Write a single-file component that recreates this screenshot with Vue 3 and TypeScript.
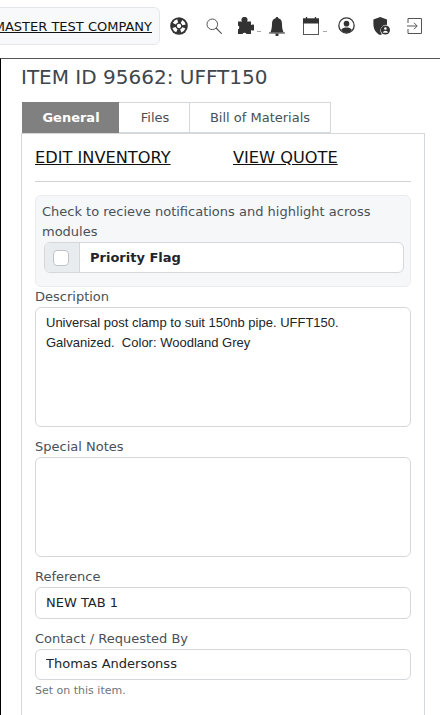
<script setup lang="ts">
const tabs: string[] = ['General', 'Files', 'Bill of Materials']
const description = 'Universal post clamp to suit 150nb pipe. UFFT150.\nGalvanized.  Color: Woodland Grey'
</script>

<template>
  <div class="page">
    <header class="topbar">
      <a class="company">MASTER TEST COMPANY</a>
      <div class="icons">
        <svg class="ic i-ring" viewBox="0 0 20 20"><circle cx="10" cy="10" r="9.8" fill="#333"/><circle cx="10" cy="10" r="5.800" fill="none" stroke="#fff" stroke-width="3.800" stroke-dasharray="4.700 4.410" stroke-dashoffset="-2.200"/><circle cx="10" cy="10" r="2.400" fill="#fff"/></svg>
        <svg class="ic i-search" viewBox="0 0 16 16" fill="none" stroke="#555"><circle cx="6.300" cy="6.300" r="5.300" stroke-width="1"/><path d="m10 10 5.700 5.700" stroke-width="1.100"/></svg>
        <svg class="ic i-puzzle" viewBox="0 0 17 17"><path fill="#333" d="M1 4.500H5A3 3 0 1 1 10 4.500H14V8A3 3 0 1 1 14 13V17H9.500A2.200 2.200 0 0 0 5.500 17H1V12.500A2.200 2.200 0 0 0 1 8.500Z"/></svg>
        <span class="dash d1"></span>
        <svg class="ic i-bell" viewBox="0 0 16 19"><path fill="#333" d="M8 0c.8 0 1.300.5 1.300 1.300 2.900.6 3.700 3 3.700 5.700 0 3.500.6 6.200 1.600 8.500H1.400C2.400 13.200 3 10.500 3 7c0-2.700.8-5.100 3.700-5.700C6.700.5 7.200 0 8 0z"/><path d="M0 16h16" stroke="#333" stroke-width="1"/><path fill="#333" d="M6.500 16.500h3V18a1.500 1.500 0 0 1-3 0z"/></svg>
        <svg class="ic i-cal" viewBox="0 0 16 18"><rect x=".5" y="2" width="15" height="15.500" fill="#fff" stroke="#555" stroke-width="1"/><path fill="#333" d="M0 1.500h16V6.500H0z"/><path d="M3.500 0v2M12.500 0v2" stroke="#333" stroke-width="1.300"/></svg>
        <span class="dash d2"></span>
        <svg class="ic i-user" viewBox="0 0 20 20"><circle cx="10" cy="10" r="9" fill="#fff" stroke="#333" stroke-width="1.500"/><circle cx="10" cy="7.800" r="3.300" fill="#333"/><path fill="#333" d="M3.600 15.200c1.500-2.200 3.800-2.800 6.400-2.800s4.900.6 6.400 2.800A8.700 8.700 0 0 1 10 18.900a8.700 8.700 0 0 1-6.400-3.700z"/></svg>
        <svg class="ic i-shield" viewBox="0 0 17 18"><path fill="#333" d="M7.200 0 14 2.500v5.500a5.500 5.500 0 0 0-5 9.200l-1.800.8C2.400 16 .4 11.500.4 7V2.500z"/><circle cx="12.400" cy="13" r="4.600" fill="#333"/><circle cx="12.400" cy="11.500" r="1.300" fill="#fff"/><path fill="#fff" d="M9.800 15.800a2.700 2.700 0 0 1 5.200 0z"/></svg>
        <svg class="ic i-exit" viewBox="0 0 15 16" fill="none" stroke="#555" stroke-width="1"><path d="M1 5V.5h13.500v15H1V11"/><path d="M0 8h10M7 4.800 10.200 8 7 11.200"/></svg>
      </div>
    </header>

    <main class="main">
      <h1 class="title">ITEM ID 95662: UFFT150</h1>
      <nav class="tabs">
        <div v-for="(t, i) in tabs" :key="t" class="tab" :class="{ active: i === 0 }">{{ t }}</div>
      </nav>
      <section class="panel">
        <div class="links">
          <a class="link edit">EDIT INVENTORY</a>
          <a class="link">VIEW QUOTE</a>
        </div>
        <hr class="rule" />
        <div class="notice">
          <p class="notice-text">Check to recieve notifications and highlight across modules</p>
          <div class="group">
            <span class="addon"><span class="check"></span></span>
            <span class="flag">Priority Flag</span>
          </div>
        </div>
        <label class="label first">Description</label>
        <textarea class="control desc" readonly :value="description"></textarea>
        <label class="label">Special Notes</label>
        <textarea class="control notes" readonly></textarea>
        <label class="label">Reference</label>
        <input class="control input ref" readonly value="NEW TAB 1" />
        <label class="label">Contact / Requested By</label>
        <input class="control input" readonly value="Thomas Andersonss" />
        <small class="help">Set on this item.</small>
      </section>
    </main>
  </div>
</template>

<style>
html, body { margin: 0; background: #fff; overflow: hidden; }
</style>

<style scoped>
.page {
  width: 440px;
  height: 715px;
  overflow: hidden;
  font-family: "DejaVu Sans", sans-serif;
  background: #fff;
}
.topbar {
  display: flex;
  align-items: flex-start;
  height: 58px;
  box-sizing: border-box;
}
.company {
  flex: none;
  box-sizing: border-box;
  display: flex;
  align-items: center;
  justify-content: flex-end;
  width: 180px;
  height: 38px;
  margin: 7px 0 0 -20px;
  padding-right: 7px;
  background: #f8f9fa;
  border: 1px solid #e4e7ea;
  border-radius: 6px;
  font-size: 13px;
  color: #111;
  text-decoration: underline;
  white-space: nowrap;
}
.icons {
  display: flex;
  align-items: flex-start;
  height: 19px;
  margin: 17px 0 0 10px;
}
.ic { flex: none; display: block; }
.i-ring { width: 18px; height: 18px; }
.i-search { width: 16px; height: 16px; margin: 1px 0 0 18px; }
.i-puzzle { width: 17px; height: 17px; margin-left: 15px; }
.i-bell { width: 16px; height: 19px; margin-left: 8px; }
.i-cal { width: 16px; height: 18px; margin-left: 18px; }
.i-user { width: 17px; height: 17px; margin-left: 11px; }
.i-shield { width: 17px; height: 18px; margin-left: 18px; }
.i-exit { width: 15px; height: 16px; margin: 1px 0 0 17px; }
.dash { flex: none; width: 4px; height: 1px; margin-top: 14px; background: #aaa; }
.d1 { margin-left: 3px; }
.d2 { margin-left: 4px; }
.main {
  height: 657px;
  box-sizing: border-box;
  border-top: 1px solid #555;
  border-left: 1px solid #000;
  padding: 0 15px 0 21px;
}
.title {
  margin: 6px 0 0 -1px;
  height: 37px;
  font-size: 20px;
  line-height: 24px;
  font-weight: 400;
  color: #40464c;
}
.tabs { display: flex; height: 31px; }
.tab {
  box-sizing: border-box;
  display: flex;
  align-items: center;
  justify-content: center;
  border: 1px solid #d5d8db;
  border-left: 0;
  font-size: 13px;
  color: #495057;
}
.tab:nth-child(2) { width: 71px; padding-left: 2px; }
.tab:nth-child(3) { width: 141px; }
.tab.active {
  width: 97px;
  padding-left: 2px;
  background: #808080;
  border-color: #808080;
  color: #fff;
  font-weight: 700;
}
.panel {
  display: flex;
  flex-direction: column;
  height: 600px;
  box-sizing: border-box;
  border: 1px solid #d5d8db;
  border-bottom: 0;
  margin-left: -1px;
  padding: 11px 13px 0 13px;
}
.links { display: flex; height: 24px; align-items: center; }
.link {
  font-size: 16.200px;
  color: #111;
  text-decoration: underline;
  white-space: nowrap;
}
.edit { width: 198px; }
.rule { width: 100%; margin: 12px 0 13px; border: 0; border-top: 1px solid #d0d3d6; }
.notice {
  box-sizing: border-box;
  height: 92px;
  background: #f6f7f9;
  border: 1px solid #e9ecef;
  border-radius: 6px;
  padding: 6px 6px 0 6px;
}
.notice-text {
  margin: 0;
  font-size: 13px;
  line-height: 20px;
  color: #495057;
}
.group {
  display: flex;
  height: 31px;
  box-sizing: border-box;
  margin-left: 2px;
  border: 1px solid #d5d8db;
  border-radius: 6px;
  overflow: hidden;
  background: #fff;
}
.addon {
  box-sizing: border-box;
  display: flex;
  align-items: center;
  justify-content: center;
  width: 35px;
  padding-right: 2px;
  background: #e9ecef;
  border-right: 1px solid #d5d8db;
}
.check {
  box-sizing: border-box;
  width: 16px;
  height: 16px;
  background: #fff;
  border: 1px solid #bfc4c9;
  border-radius: 4px;
}
.flag {
  display: flex;
  align-items: center;
  margin-left: 10px;
  font-size: 13px;
  font-weight: 700;
  color: #212529;
}
.label {
  margin-top: 12px;
  height: 15px;
  line-height: 15px;
  font-size: 13px;
  color: #495057;
  margin-bottom: 3px;
}
.label.first { margin-top: 2px; }
.control {
  display: block;
  box-sizing: border-box;
  width: 100%;
  margin: 0;
  border: 1px solid #d5d8db;
  border-radius: 6px;
  background: #fff;
  color: #212529;
  outline: none;
  resize: none;
}
textarea.control {
  padding: 5px 10px;
  font-family: "Liberation Sans", Arial, sans-serif;
  font-size: 13px;
  line-height: 20px;
}
.desc { height: 120px; }
.notes { height: 100px; }
.input { height: 32px; padding: 0 10px 2px; font-family: inherit; font-size: 13px; }
.input:not(.ref) { height: 31px; }
.help { margin-top: 4px; font-size: 11px; line-height: 14px; color: #6c757d; }
</style>
